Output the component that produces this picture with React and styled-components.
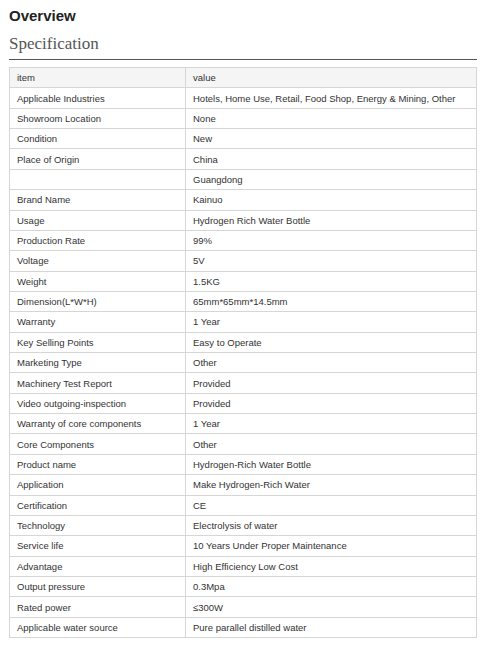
import styled, { createGlobalStyle } from "styled-components";

const GlobalStyle = createGlobalStyle`
  body {
    margin: 0;
    background: #fff;
    font-family: "Liberation Sans", Arial, sans-serif;
  }
`;

const Page = styled.div`
  padding: 6px 13px 0 9px;
`;

const Title = styled.h2`
  margin: 0;
  font-size: 15px;
  font-weight: bold;
  color: #222;
  line-height: 20px;
`;

const Subtitle = styled.h3`
  margin: 8px 0 0;
  font-family: "Liberation Serif", "Times New Roman", serif;
  font-size: 17px;
  font-weight: normal;
  color: #555;
  line-height: 20px;
  padding-bottom: 5px;
  border-bottom: 1px solid #555;
`;

const Table = styled.table`
  margin-top: 7px;
  width: 100%;
  border-collapse: collapse;
  font-size: 9.5px;
  color: #333;
`;

const Cell = styled.td`
  border: 1px solid #d6d6d6;
  height: 20.36px;
  padding: 0 7px;
  box-sizing: border-box;
  background: ${p => (p.$head ? "#f5f5f5" : "#fff")};
  width: ${p => (p.$first ? "176px" : "auto")};
`;

const rows = [
  ["Applicable Industries", "Hotels, Home Use, Retail, Food Shop, Energy & Mining, Other"],
  ["Showroom Location", "None"],
  ["Condition", "New"],
  ["Place of Origin", "China"],
  ["", "Guangdong"],
  ["Brand Name", "Kainuo"],
  ["Usage", "Hydrogen Rich Water Bottle"],
  ["Production Rate", "99%"],
  ["Voltage", "5V"],
  ["Weight", "1.5KG"],
  ["Dimension(L*W*H)", "65mm*65mm*14.5mm"],
  ["Warranty", "1 Year"],
  ["Key Selling Points", "Easy to Operate"],
  ["Marketing Type", "Other"],
  ["Machinery Test Report", "Provided"],
  ["Video outgoing-inspection", "Provided"],
  ["Warranty of core components", "1 Year"],
  ["Core Components", "Other"],
  ["Product name", "Hydrogen-Rich Water Bottle"],
  ["Application", "Make Hydrogen-Rich Water"],
  ["Certification", "CE"],
  ["Technology", "Electrolysis of water"],
  ["Service life", "10 Years Under Proper Maintenance"],
  ["Advantage", "High Efficiency Low Cost"],
  ["Output pressure", "0.3Mpa"],
  ["Rated power", "≤300W"],
  ["Applicable water source", "Pure parallel distilled water"],
];

export default function App() {
  return (
    <>
      <GlobalStyle />
      <Page>
        <Title>Overview</Title>
        <Subtitle>Specification</Subtitle>
        <Table>
          <tbody>
            <tr>
              <Cell $head $first>item</Cell>
              <Cell $head>value</Cell>
            </tr>
            {rows.map(([k, v], i) => (
              <tr key={i}>
                <Cell $first>{k}</Cell>
                <Cell>{v}</Cell>
              </tr>
            ))}
          </tbody>
        </Table>
      </Page>
    </>
  );
}
